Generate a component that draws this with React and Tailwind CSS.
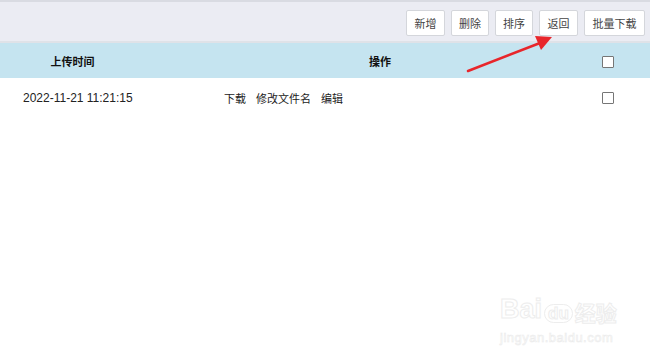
const buttons = [
  { label: '新增', w: 'w-[39px]' },
  { label: '删除', w: 'w-[38px]' },
  { label: '排序', w: 'w-[38px]' },
  { label: '返回', w: 'w-[39px]' },
  { label: '批量下载', w: 'w-[61px]' },
]

const cjk = { fontFamily: '"Noto Sans CJK SC", sans-serif' }

function Checkbox() {
  return <span className="block w-[12px] h-[12px] border border-[#767676] bg-white rounded-[1px]" />
}

export default function App() {
  return (
    <div
      className="relative w-[650px] h-[360px] bg-white overflow-hidden text-[12px] text-[#222]"
      style={{ fontFamily: '"Liberation Sans", "Noto Sans CJK SC", sans-serif' }}
    >
      <div className="h-[43px] bg-[#ebecf3] border-t-2 border-[#d9dbe2] border-b-2 border-b-[#dfe2e8] flex items-start justify-end pt-[8px] pr-[5px] gap-[6px]">
        {buttons.map((b) => (
          <button
            key={b.label}
            className={`${b.w} h-[26px] bg-white border border-[#d4d6db] rounded-[2px] text-[#444] text-[11px] leading-none`}
            style={cjk}
          >
            {b.label}
          </button>
        ))}
      </div>

      <div
        className="grid grid-cols-[145px_79px_312px_1fr] h-[35px] bg-[#c5e4f0] items-center pt-[2px] font-bold text-[11px] text-[#111]"
        style={cjk}
      >
        <div className="text-center">上传时间</div>
        <div />
        <div className="text-center">操作</div>
        <div className="flex justify-end pr-[36px]">
          <Checkbox />
        </div>
      </div>

      <div className="grid grid-cols-[145px_79px_312px_1fr] h-[40px] items-center">
        <div className="pl-[23px] whitespace-nowrap">2022-11-21 11:21:15</div>
        <div />
        <div className="flex gap-[10px] whitespace-nowrap text-[11px]" style={cjk}>
          <span>下载</span>
          <span>修改文件名</span>
          <span>编辑</span>
        </div>
        <div className="flex justify-end pr-[36px]">
          <Checkbox />
        </div>
      </div>

      <svg className="absolute left-0 top-0 pointer-events-none" width="650" height="360">
        <line x1="468" y1="71" x2="540" y2="43" stroke="#e8262b" strokeWidth="2.5" strokeLinecap="round" />
        <polygon points="552,37 535,36 541,50" fill="#e8262b" />
      </svg>

      <div className="absolute left-[500px] top-[296px] flex flex-col items-start pointer-events-none select-none">
        <div className="flex items-end gap-[2px] text-[27px] font-bold leading-none text-white" style={{ WebkitTextStroke: '1px #ededed' }}>
          <span>Bai</span>
          <span className="text-[17px] px-[3px] rounded-full border border-[#ededed]">du</span>
          <span className="text-[21px]" style={cjk}>经验</span>
        </div>
        <div className="text-[13px] text-white mt-[5px] tracking-[0.5px]" style={{ WebkitTextStroke: '0.6px #ebebeb' }}>
          jingyan.baidu.com
        </div>
      </div>
    </div>
  )
}
